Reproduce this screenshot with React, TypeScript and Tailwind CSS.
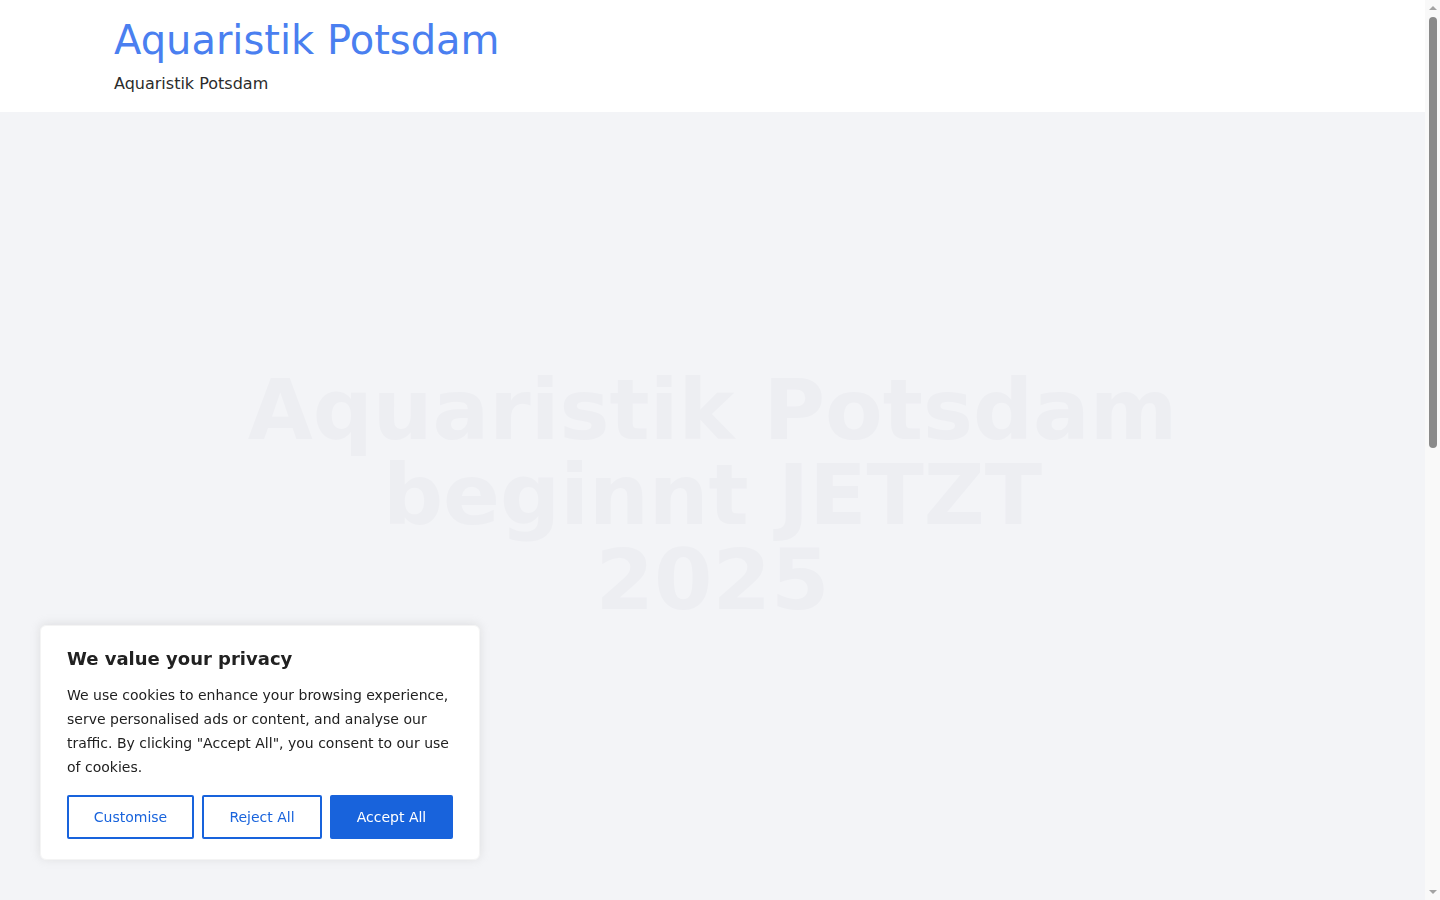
import React from "react";

const CookieBanner: React.FC = () => {
  return (
    <div className="fixed bottom-[40px] left-[40px] z-50 w-[440px] rounded-[6px] border border-[#f4f4f4] bg-white shadow-[0_-1px_10px_0_rgba(172,171,171,0.3)]">
      <div className="px-[26px] pt-[21px] pb-[20px]">
        <p className="mb-[12px] text-[18px] font-bold leading-[24px] text-[#212121]">
          We value your privacy
        </p>
        <p className="text-[14px] leading-[24px] text-[#212121]">
          We use cookies to enhance your browsing experience, serve personalised ads or content, and
          analyse our traffic. By clicking "Accept All", you consent to our use of cookies.
        </p>
        <div className="mt-[16px] flex gap-[8px]">
          <button className="h-[44px] w-[127px] rounded-[2px] border-2 border-[#1863dc] bg-transparent text-[14px] text-[#1863dc]">
            Customise
          </button>
          <button className="h-[44px] w-[120px] rounded-[2px] border-2 border-[#1863dc] bg-transparent text-[14px] text-[#1863dc]">
            Reject All
          </button>
          <button className="h-[44px] w-[123px] rounded-[2px] border-2 border-[#1863dc] bg-[#1863dc] text-[14px] text-white">
            Accept All
          </button>
        </div>
      </div>
    </div>
  );
};

// fake browser scrollbar, the reference page is about twice the window height
const ScrollBar: React.FC = () => {
  return (
    <div className="flex h-[900px] w-[15px] flex-col items-center bg-[#f9f9f9]">
      <div className="mt-[6px] h-0 w-0 border-x-[4px] border-b-[4px] border-x-transparent border-b-[#a3a3a3]" />
      <div className="mt-[7px] h-[431px] w-[8px] rounded-full bg-[#8a8a8a]" />
      <div className="flex-1" />
      <div className="mb-[6px] h-0 w-0 border-x-[4px] border-t-[4px] border-x-transparent border-t-[#a3a3a3]" />
    </div>
  );
};

const App: React.FC = () => {
  return (
    <div className="flex h-[900px] overflow-hidden font-['DejaVu_Sans',sans-serif]">
      <div className="h-[900px] w-[1425px] bg-[#f3f4f7]">
        <header className="bg-white">
          <div className="mx-auto w-[1197px] pt-[16px] pb-[17px]">
            <p className="text-[40px] leading-[48px] text-[#4a7ff0]">
              <a href="#">Aquaristik Potsdam</a>
            </p>
            <p className="mt-[8px] text-[16px] leading-[23px] text-[#2b2b2b]">Aquaristik Potsdam</p>
          </div>
        </header>

        <section className="flex h-[766px] items-center justify-center">
          <h1 className="text-center text-[84px] font-bold leading-[85px] text-[#edeef2]">
            Aquaristik Potsdam
            <br />
            beginnt JETZT
            <br />
            2025
          </h1>
        </section>
      </div>
      <ScrollBar />

      <CookieBanner />
    </div>
  );
};

export default App;
